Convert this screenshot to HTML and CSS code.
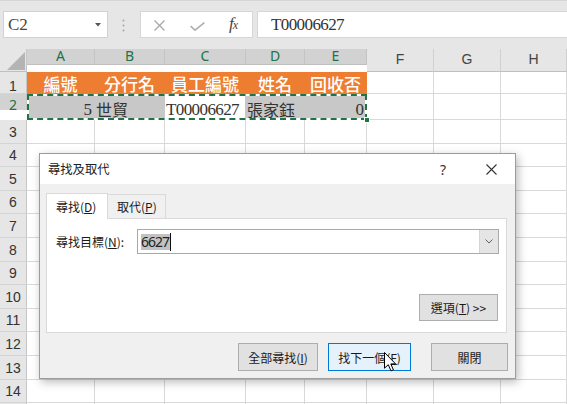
FILE: index.html
```html
<!DOCTYPE html>
<html lang="zh-Hant">
<head>
<meta charset="utf-8">
<title>尋找及取代</title>
<link rel="stylesheet" href="styles.css">
</head>
<body>
<div class="app">
  <div class="fbar">
    <div class="namebox"><span>C2</span><svg class="nb-arrow" width="6" height="4" viewBox="0 0 6 4"><path d="M0 0H6L3 3.5Z" fill="#555"/></svg></div>
    <svg class="grip" width="3" height="13" viewBox="0 0 3 13"><circle cx="1.5" cy="1.5" r="1" fill="#a6a6a6"/><circle cx="1.5" cy="6.5" r="1" fill="#a6a6a6"/><circle cx="1.5" cy="11.5" r="1" fill="#a6a6a6"/></svg>
    <div class="fbtns">
      <svg class="ico-x" width="11" height="11" viewBox="0 0 11 11"><path d="M0.5 0.5L10.5 10.5M10.5 0.5L0.5 10.5" stroke="#a8a8a8" stroke-width="1.3"/></svg>
      <svg class="ico-ok" width="15" height="9" viewBox="0 0 15 9"><path d="M0.6 4.2L5 8.2L14.4 0.6" fill="none" stroke="#b0b0b0" stroke-width="1.6"/></svg>
      <span class="fx"><i>f</i><i class="fx-x">x</i></span>
    </div>
    <div class="finput">T00006627</div>
  </div>

  <div class="sheet">
    <div class="corner"><svg width="27" height="23" viewBox="0 0 27 23"><path d="M7 21H25V3Z" fill="#b4b4b4"/></svg></div>
    <div class="ch sel">A</div><div class="ch sel">B</div><div class="ch sel">C</div><div class="ch sel">D</div><div class="ch sel">E</div><div class="ch">F</div><div class="ch">G</div><div class="ch">H</div>

    <div class="rh r1">1</div>
    <div class="c o">編號</div><div class="c o">分行名</div><div class="c o">員工編號</div><div class="c o">姓名</div><div class="c o">回收否</div><div class="c"></div><div class="c"></div><div class="c"></div>

    <div class="rh sel r2">2</div>
    <div class="c s num anchor">5<div class="marquee"><span class="handle"></span></div></div><div class="c s cjk">世貿</div><div class="c w lat">T00006627</div><div class="c s cjk">張家鈺</div><div class="c s num">0</div><div class="c"></div><div class="c"></div><div class="c"></div>

    <div class="rh">3</div><div class="c"></div><div class="c"></div><div class="c"></div><div class="c"></div><div class="c"></div><div class="c"></div><div class="c"></div><div class="c"></div>
    <div class="rh">4</div><div class="c"></div><div class="c"></div><div class="c"></div><div class="c"></div><div class="c"></div><div class="c"></div><div class="c"></div><div class="c"></div>
    <div class="rh">5</div><div class="c"></div><div class="c"></div><div class="c"></div><div class="c"></div><div class="c"></div><div class="c"></div><div class="c"></div><div class="c"></div>
    <div class="rh">6</div><div class="c"></div><div class="c"></div><div class="c"></div><div class="c"></div><div class="c"></div><div class="c"></div><div class="c"></div><div class="c"></div>
    <div class="rh">7</div><div class="c"></div><div class="c"></div><div class="c"></div><div class="c"></div><div class="c"></div><div class="c"></div><div class="c"></div><div class="c"></div>
    <div class="rh">8</div><div class="c"></div><div class="c"></div><div class="c"></div><div class="c"></div><div class="c"></div><div class="c"></div><div class="c"></div><div class="c"></div>
    <div class="rh">9</div><div class="c"></div><div class="c"></div><div class="c"></div><div class="c"></div><div class="c"></div><div class="c"></div><div class="c"></div><div class="c"></div>
    <div class="rh">10</div><div class="c"></div><div class="c"></div><div class="c"></div><div class="c"></div><div class="c"></div><div class="c"></div><div class="c"></div><div class="c"></div>
    <div class="rh">11</div><div class="c"></div><div class="c"></div><div class="c"></div><div class="c"></div><div class="c"></div><div class="c"></div><div class="c"></div><div class="c"></div>
    <div class="rh">12</div><div class="c"></div><div class="c"></div><div class="c"></div><div class="c"></div><div class="c"></div><div class="c"></div><div class="c"></div><div class="c"></div>
    <div class="rh">13</div><div class="c"></div><div class="c"></div><div class="c"></div><div class="c"></div><div class="c"></div><div class="c"></div><div class="c"></div><div class="c"></div>
    <div class="rh">14</div><div class="c"></div><div class="c"></div><div class="c"></div><div class="c"></div><div class="c"></div><div class="c"></div><div class="c"></div><div class="c"></div>
    <div class="rh"></div><div class="c"></div><div class="c"></div><div class="c"></div><div class="c"></div><div class="c"></div><div class="c"></div><div class="c"></div><div class="c"></div>
  </div>

  <div class="dialog">
    <div class="dlg-title">
      <span class="dlg-name">尋找及取代</span>
      <span class="dlg-help">?</span>
      <svg class="dlg-close" width="11" height="11" viewBox="0 0 11 11"><path d="M0.5 0.5L10.5 10.5M10.5 0.5L0.5 10.5" stroke="#333" stroke-width="1.1"/></svg>
    </div>
    <div class="dlg-body">
      <div class="tabs">
        <div class="tab active">尋找(<u>D</u>)</div>
        <div class="tab">取代(<u>P</u>)</div>
      </div>
      <div class="panel">
        <div class="find-row">
          <span class="find-label">尋找目標(<u>N</u>):</span>
          <div class="combo">
            <span class="sel">6627</span><span class="caret"></span>
            <span class="combo-btn"><svg width="8" height="5" viewBox="0 0 8 5"><path d="M0.5 0.5L4 4L7.5 0.5" fill="none" stroke="#606060" stroke-width="1"/></svg></span>
          </div>
        </div>
        <button class="btn opt">選項(<u>T</u>) &gt;&gt;</button>
      </div>
      <div class="actions">
        <button class="btn b-all">全部尋找(<u>I</u>)</button>
        <button class="btn b-next">找下一個(<u>F</u>)</button>
        <button class="btn b-close">關閉</button>
      </div>
    </div>
  </div>

  <svg class="cursor" width="13" height="20" viewBox="0 0 13 20"><path d="M0.5 0.5V16.2L4.3 12.7L7 18.9L9.4 17.9L6.8 11.9H11.6Z" fill="#fff" stroke="#000" stroke-width="1"/></svg>
</div>
</body>
</html>
```

FILE: styles.css
```css
* { box-sizing: border-box; }
html, body { margin: 0; padding: 0; }
body {
  width: 567px;
  height: 404px;
  overflow: hidden;
  background: #fff;
  font-family: "Noto Sans CJK TC", "Noto Sans", sans-serif;
}
.app {
  position: relative;
  width: 567px;
  height: 404px;
  overflow: hidden;
  background: #e6e6e6;
}

/* formula bar */
.fbar {
  height: 49px;
  padding-top: 10px;
  border-top: 1px solid #d6d6d6;
  display: flex;
  align-items: flex-start;
  background: #e6e6e6;
}
.namebox {
  margin-left: 3px;
  width: 105px;
  height: 27px;
  background: #fff;
  border: 1px solid #d2d2d2;
  display: flex;
  align-items: center;
  justify-content: space-between;
  padding: 0 6px 0 4px;
  font-family: "Liberation Serif", serif;
  font-size: 17px;
  color: #444;
}
.nb-arrow { margin-top: 1px; }
.grip { margin: 8px 15px 0 14px; }
.fbtns {
  width: 113px;
  height: 27px;
  background: #fff;
  border: 1px solid #d6d6d6;
  display: flex;
  align-items: center;
  padding-left: 13px;
}
.ico-x { margin-top: 1px; }
.ico-ok { margin-left: 25px; margin-top: 3px; }
.fx {
  margin-left: 24px;
  font-family: "Liberation Serif", serif;
  color: #444;
  font-size: 17px;
  line-height: 20px;
  letter-spacing: -1px;
}
.fx-x { font-size: 12px; }
.finput {
  margin-left: 4px;
  flex: 1;
  height: 27px;
  background: #fff;
  border: 1px solid #d6d6d6;
  border-right: none;
  padding-left: 13px;
  font-family: "Liberation Serif", serif;
  font-size: 17px;
  letter-spacing: -0.6px;
  line-height: 25px;
  color: #333;
}

/* sheet */
.sheet {
  display: grid;
  grid-template-columns: 27px 68px 70px 81px 59px 62px 67px 67px 66px;
  grid-template-rows: 23px 22px 26px 24px 23px 24px 23px 24px 24px 23px 24px 23px 24px 24px 23px 23px;
  background: #fff;
}
.corner {
  background: #e6e6e6;
  border-right: 1px solid #c6c6c6;
  border-bottom: 1px solid #bfbfbf;
}
.corner svg { display: block; }
.ch {
  background: #e6e6e6;
  border-right: 1px solid #d0d0d0;
  border-bottom: 1px solid #bfbfbf;
  display: flex;
  align-items: center;
  justify-content: center;
  font-family: "Liberation Sans", sans-serif;
  font-size: 14px;
  color: #444;
  padding-bottom: 2px;
}
.ch.sel {
  background: #d2d2d2;
  color: #217346;
  border-right-color: #c4c4c4;
}
.rh {
  background: #e6e6e6;
  border-right: 1px solid #c6c6c6;
  border-bottom: 1px solid #d4d4d4;
  display: flex;
  align-items: center;
  justify-content: center;
  font-family: "Liberation Sans", sans-serif;
  font-size: 14px;
  color: #333;
}
.rh.r1 { padding-top: 7px; }
.rh.r2 { padding-top: 6px; }
.rh.sel { background: #d2d2d2; color: #217346; }
.c {
  border-right: 1px solid #d9d9d9;
  border-bottom: 1px solid #d9d9d9;
  background: #fff;
  white-space: nowrap;
  overflow: visible;
}
.c.o {
  background: #ed7d31;
  border-color: #ed7d31;
  color: #fff;
  font-size: 17px;
  font-weight: 500;
  line-height: 18px;
  display: flex;
  align-items: flex-end;
  justify-content: center;
}
.c.s { background: #c8c8c8; border-color: #c8c8c8; }
.c.w { background: #fff; border-right-color: #c8c8c8; }
.num, .lat, .cjk {
  display: flex;
  align-items: flex-end;
  color: #333;
}
.num, .lat {
  font-family: "Liberation Serif", serif;
  font-size: 17px;
  line-height: 18px;
}
.num { justify-content: flex-end; padding-right: 2px; }
.lat { padding-left: 1px; letter-spacing: -0.6px; }
.cjk {
  font-family: "Noto Sans CJK TC", sans-serif;
  font-size: 16px;
  line-height: 18px;
  padding-left: 1px;
  padding-bottom: 1px;
}
.anchor { position: relative; }
.marquee {
  position: absolute;
  left: 0;
  top: 0;
  width: 340px;
  height: 26px;
  border: 2px solid #fff;
  outline: 2px dashed #217346;
  outline-offset: -2px;
}
.handle {
  position: absolute;
  right: -5px;
  bottom: -5px;
  width: 6px;
  height: 6px;
  background: #217346;
  border: 1px solid #fff;
}

/* dialog */
.dialog {
  position: absolute;
  left: 39px;
  top: 153px;
  width: 477px;
  height: 226px;
  background: #f0f0f0;
  border: 1px solid #9c9c9c;
  box-shadow: 2px 3px 9px rgba(0, 0, 0, 0.28);
  font-family: "Noto Sans CJK TC", sans-serif;
  font-size: 12px;
  color: #1a1a1a;
}
.dlg-title {
  height: 30px;
  background: #fff;
  display: flex;
  align-items: center;
  padding-left: 8px;
}
.dlg-name { font-size: 12.3px; color: #222; }
.dlg-help {
  margin-left: auto;
  margin-right: 40px;
  font-family: "Noto Sans", sans-serif;
  font-size: 14px;
  color: #333;
}
.dlg-close { margin-right: 18px; }
.dlg-body {
  padding: 9px 7px 0 6px;
}
.tabs {
  display: flex;
  align-items: flex-end;
  height: 25px;
  position: relative;
  z-index: 1;
}
.tab {
  height: 24px;
  width: 58px;
  padding-left: 9px;
  border: 1px solid #d9d9d9;
  border-left: none;
  border-bottom: none;
  background: #f0f0f0;
  line-height: 23px;
  white-space: nowrap;
}
.tab.active {
  width: 62px;
  height: 26px;
  margin-bottom: -1px;
  border-left: 1px solid #d9d9d9;
  background: #fff;
  line-height: 25px;
}
.panel {
  margin-right: 1px;
  height: 115px;
  background: #fff;
  border: 1px solid #d9d9d9;
  padding: 10px 7px 11px 9px;
  display: flex;
  flex-direction: column;
  justify-content: space-between;
}
.find-row { display: flex; align-items: center; height: 25px; }
.find-label { width: 81px; white-space: nowrap; }
.combo {
  flex: 1;
  height: 25px;
  border: 1px solid #a9a9a9;
  background: #fff;
  display: flex;
  align-items: center;
  padding-left: 3px;
}
.sel {
  background: #c2c2c2;
  font-family: "Noto Sans", sans-serif;
  font-size: 14px;
  letter-spacing: -1px;
  line-height: 16px;
  height: 16px;
  color: #222;
  padding-right: 1px;
}
.caret { width: 1px; height: 18px; background: #111; }
.combo-btn {
  margin-left: auto;
  width: 19px;
  height: 23px;
  background: #e5e5e5;
  border-left: 1px solid #d4d4d4;
  display: flex;
  align-items: center;
  justify-content: center;
}
.btn {
  font-family: "Noto Sans CJK TC", sans-serif;
  font-size: 12px;
  color: #1a1a1a;
  background: #e1e1e1;
  border: 1px solid #adadad;
  padding: 0;
  margin: 0;
  white-space: nowrap;
}
.opt {
  align-self: flex-end;
  margin-right: 1px;
  width: 79px;
  height: 27px;
}
.actions {
  margin-top: 10px;
  display: flex;
  justify-content: flex-end;
}
.actions .btn { height: 28px; }
.b-all { width: 80px; }
.b-next {
  width: 83px;
  margin-left: 10px;
  background: #e5f1fb;
  border-color: #0078d7;
}
.b-close { width: 77px; margin-left: 20px; }

.cursor {
  position: absolute;
  left: 384px;
  top: 352px;
}
```
